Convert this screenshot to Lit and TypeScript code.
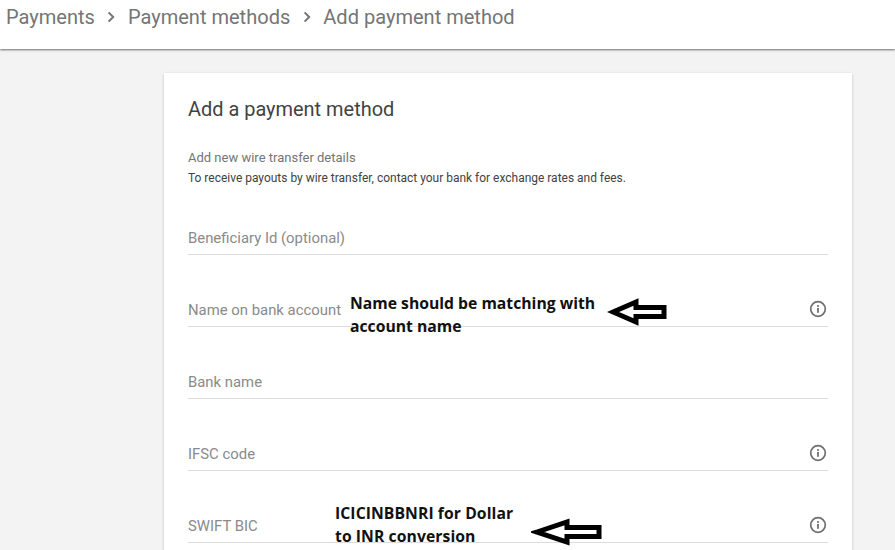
import { LitElement, html, css } from "lit";
import { customElement } from "lit/decorators.js";

const FIELDS = [
  { label: "Beneficiary Id (optional)", info: false },
  { label: "Name on bank account", info: true },
  { label: "Bank name", info: false },
  { label: "IFSC code", info: true },
  { label: "SWIFT BIC", info: true },
];

const chevron = html`<svg class="chev" width="24" height="24" viewBox="0 0 24 24"><path d="M9.6 7.4 14.2 12l-4.6 4.6" fill="none" stroke="#757575" stroke-width="2"/></svg>`;
const info = html`<svg class="info" width="20" height="20" viewBox="0 0 20 20"><circle cx="10" cy="10" r="7.3" fill="none" stroke="#6f6f6f" stroke-width="1.7"/><rect x="9.1" y="9" width="1.8" height="4.8" fill="#6f6f6f"/><rect x="9.1" y="6.1" width="1.8" height="1.8" fill="#6f6f6f"/></svg>`;

@customElement("app-root")
export class AppRoot extends LitElement {
  static styles = css`
    :host { display: block; position: relative; width: 895px; height: 550px; overflow: hidden; background: #f3f3f3; font-family: Roboto, "Liberation Sans", sans-serif; }
    .top { height: 49px; box-sizing: border-box; background: #fff; box-shadow: 0 1px 2px rgba(0,0,0,.55); display: flex; align-items: flex-start; padding: 4px 0 0 6px; color: #757575; font-size: 20.05px; line-height: 26px; position: relative; }
    .chev { margin: 1px 4.5px 0 4.5px; flex: none; }
    .main { padding: 24px 43px 0 164px; }
    .card { background: #fff; box-shadow: 0 1px 3px rgba(0,0,0,.2); padding: 24px 24px 0; height: 600px; box-sizing: border-box; }
    h1 { margin: 0; font-weight: 400; font-size: 19.95px; line-height: 24px; color: #424242; }
    .sub { margin-top: 27px; font-size: 13px; line-height: 20px; color: #757575; }
    .desc { font-size: 11.98px; line-height: 20px; color: #424242; }
    .fields { margin-top: 2px; }
    .field { height: 72px; box-sizing: border-box; border-bottom: 1px solid #dcdcdc; display: flex; align-items: flex-end; justify-content: space-between; font-size: 14.88px; line-height: 20px; color: #8a8a8a; padding-bottom: 6px; }
    .field:first-child { height: 65px; }
    .info { margin-bottom: 1px; }
    .note { position: absolute; font-family: "Open Sans", sans-serif; font-weight: 700; font-size: 15.72px; line-height: 23px; color: #111; }
    .n1 { left: 350px; top: 292px; }
    .n2 { left: 335px; top: 502px; letter-spacing: 0.07px; }
    .arrow { position: absolute; }
    .arrow path { fill: #fff; stroke: #000; stroke-width: 5; }
    .a1 { left: 607px; top: 297px; }
    .a2 { left: 531px; top: 517px; }
  `;
  render() {
    return html`
      <div class="top">
        <span>Payments</span>${chevron}<span>Payment methods</span>${chevron}<span>Add payment method</span>
      </div>
      <div class="main">
        <div class="card">
          <h1>Add a payment method</h1>
          <div class="sub">Add new wire transfer details</div>
          <div class="desc">To receive payouts by wire transfer, contact your bank for exchange rates and fees.</div>
          <div class="fields">
            ${FIELDS.map(f => html`<div class="field"><span>${f.label}</span>${f.info ? info : ""}</div>`)}
          </div>
        </div>
      </div>
      <div class="note n1">Name should be matching with<br />account name</div>
      <div class="note n2">ICICINBBNRI for Dollar<br />to INR conversion</div>
      <svg class="arrow a1" width="60" height="30" viewBox="0 0 60 30"><path d="M6 15 29 5v5.5h28v9H29V25z"/></svg>
      <svg class="arrow a2" width="72" height="30" viewBox="0 0 72 30"><path d="M6 15 36 5v5.5h32v9H36V25z"/></svg>
    `;
  }
}
